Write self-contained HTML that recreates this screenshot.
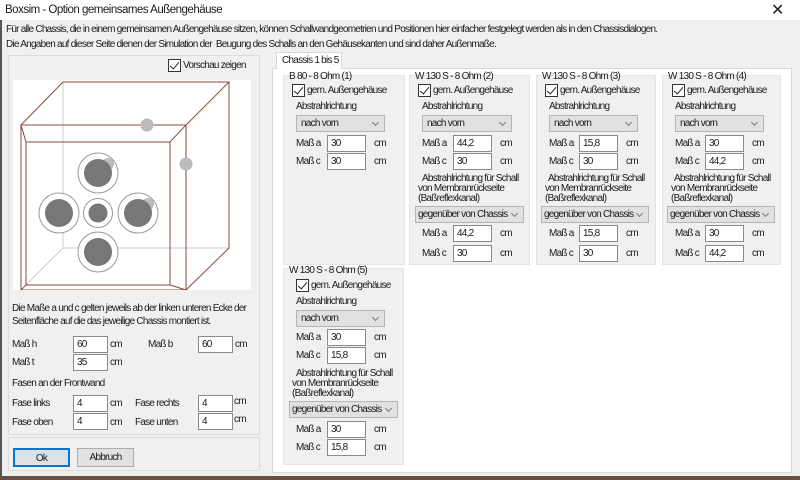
<!DOCTYPE html>
<html><head><meta charset="utf-8"><style>
*{box-sizing:border-box;margin:0;padding:0}
body{width:800px;height:480px;overflow:hidden;background:#f0f0f0;font-family:"Liberation Sans",sans-serif;font-size:10px;letter-spacing:-0.75px;color:#1a1a1a;position:relative}
.a{position:absolute;white-space:nowrap}
.inp{position:absolute;background:#fff;border:1px solid #8a8a8a;height:17px;padding:1px 3px;line-height:13px}
.sel{position:absolute;background:#e1e1e1;border:1px solid #b5b5b5;height:17px;padding:1px 4px;line-height:13px;white-space:nowrap}
.sel:after{content:"";position:absolute;right:6px;top:4px;width:4px;height:4px;border-right:1px solid #777;border-bottom:1px solid #777;transform:rotate(45deg)}
.cb{position:absolute;width:13px;height:13px;border:1px solid #333;background:#fff}
.cb:after{content:"";position:absolute;left:3px;top:0px;width:4px;height:8px;border-right:1.5px solid #222;border-bottom:1.5px solid #222;transform:rotate(40deg)}
.grp{position:absolute;background:#f0f0f0;border:1px solid #e4e4e4}
.btn{position:absolute;background:#e1e1e1;border:1px solid #adadad;text-align:center;line-height:17px}
.t{line-height:10px}
</style></head><body>
<div class="a" style="left:0;top:0;width:800px;height:20px;background:#fff"></div>
<div class="a" style="left:5px;top:4px;font-size:11.5px;letter-spacing:-0.5px">Boxsim - Option gemeinsames Außengehäuse</div>
<div class="a" style="left:771px;top:0px;font-size:16px;color:#222;letter-spacing:0">✕</div>
<div class="a" style="left:0;top:20px;width:2px;height:460px;background:#555"></div>
<div class="a" style="left:0;top:476px;width:800px;height:4px;background:#6b5040"></div>
<div class="a" style="left:6px;top:24px">Für alle Chassis, die in einem gemeinsamen Außengehäuse sitzen, können Schallwandgeometrien und Positionen hier einfacher festgelegt werden als in den Chassisdialogen.</div>
<div class="a" style="left:6px;top:39px">Die Angaben auf dieser Seite dienen der Simulation der&nbsp; Beugung des Schalls an den Gehäusekanten und sind daher Außenmaße.</div>

<div class="a" style="left:8px;top:55px;width:252px;height:380px;border:1px solid #dcdcdc"></div>
<div class="a" style="left:8px;top:437px;width:252px;height:34px;border:1px solid #dcdcdc"></div>
<div class="cb" style="left:168px;top:59px"></div><div class="a" style="left:183px;top:60px">Vorschau zeigen</div>
<svg class="a" style="left:13px;top:80px" width="238" height="210" viewBox="13 80 238 210">
<rect x="13" y="80" width="238" height="210" fill="#fff"/>
<g stroke="#ccc" fill="none" stroke-width="1"><line x1="63" y1="82" x2="63" y2="248"/><line x1="63" y1="248" x2="229" y2="248"/><line x1="63" y1="248" x2="26" y2="285"/></g>
<g stroke="#8b4a3e" fill="none" stroke-width="1"><polyline points="21,125 63,82 229,82 229,248 186,290"/><line x1="229" y1="82" x2="186" y2="125"/><rect x="21" y="125" width="165" height="165"/><polyline points="21,125 26,142 170,142 186,125"/><polyline points="26,142 26,285 170,285 170,142"/><line x1="26" y1="285" x2="21" y2="290"/><line x1="170" y1="285" x2="186" y2="290"/></g>
<g fill="#bbb"><circle cx="147" cy="125" r="6.5"/><circle cx="186" cy="164" r="6.5"/></g>
<g stroke="#999" fill="#fff"><circle cx="98" cy="173" r="20"/><circle cx="59" cy="213" r="20"/><circle cx="138" cy="213" r="20"/><circle cx="98" cy="252" r="20"/><circle cx="98" cy="213" r="14.5"/></g>
<g fill="#bbb"><circle cx="108" cy="164" r="6"/><circle cx="148" cy="204" r="6"/></g>
<g fill="#777"><circle cx="98" cy="173" r="14"/><circle cx="59" cy="213" r="14"/><circle cx="138" cy="213" r="14"/><circle cx="98" cy="252" r="14"/><circle cx="98" cy="213" r="9.5"/></g>
</svg>
<div class="a" style="left:12px;top:303px">Die Maße a und c gelten jeweils ab der linken unteren Ecke der</div>
<div class="a" style="left:12px;top:316px">Seitenfläche auf die das jeweilige Chassis montiert ist.</div>
<div class="a" style="left:12px;top:339px">Maß h</div><div class="inp" style="left:73px;top:336px;width:35px">60</div><div class="a" style="left:110px;top:339px">cm</div>
<div class="a" style="left:148px;top:339px">Maß b</div><div class="inp" style="left:198px;top:336px;width:35px">60</div><div class="a" style="left:235px;top:339px">cm</div>
<div class="a" style="left:12px;top:357px">Maß t</div><div class="inp" style="left:73px;top:354px;width:35px">35</div><div class="a" style="left:110px;top:357px">cm</div>
<div class="a" style="left:12px;top:378px">Fasen an der Frontwand</div>
<div class="a" style="left:12px;top:398px">Fase links</div><div class="inp" style="left:73px;top:395px;width:35px">4</div><div class="a" style="left:110px;top:398px">cm</div>
<div class="a" style="left:135px;top:398px">Fase rechts</div><div class="inp" style="left:198px;top:395px;width:35px">4</div><div class="a" style="left:234px;top:396px">cm</div>
<div class="a" style="left:12px;top:417px">Fase oben</div><div class="inp" style="left:73px;top:413px;width:35px">4</div><div class="a" style="left:110px;top:417px">cm</div>
<div class="a" style="left:135px;top:417px">Fase unten</div><div class="inp" style="left:198px;top:413px;width:35px">4</div><div class="a" style="left:234px;top:414px">cm</div>
<div class="btn" style="left:13px;top:448px;width:57px;height:19px;border:2px solid #0078d7">Ok</div>
<div class="btn" style="left:77px;top:448px;width:57px;height:19px">Abbruch</div>

<div class="a" style="left:272px;top:68px;width:520px;height:405px;background:#fff;border:1px solid #d9d9d9"></div>
<div class="a" style="left:276px;top:52px;width:66px;height:17px;background:#fff;border:1px solid #d9d9d9;border-bottom:none;padding:2px 5px">Chassis 1 bis 5</div>

<div class="grp" style="left:283px;top:75px;width:122px;height:190px"></div>
<div class="a" style="left:289px;top:71px">B 80 - 8 Ohm (1)</div>
<div class="cb" style="left:292px;top:84px"></div><div class="a" style="left:307px;top:85px">gem. Außengehäuse</div>
<div class="a" style="left:296px;top:101px">Abstrahlrichtung</div>
<div class="sel" style="left:296px;top:115px;width:89px">nach vorn</div>
<div class="a" style="left:296px;top:138px">Maß a</div><div class="inp" style="left:327px;top:135px;width:39px">30</div><div class="a" style="left:374px;top:138px">cm</div>
<div class="a" style="left:296px;top:156px">Maß c</div><div class="inp" style="left:327px;top:153px;width:39px">30</div><div class="a" style="left:374px;top:156px">cm</div>

<div class="grp" style="left:409px;top:75px;width:121px;height:190px"></div>
<div class="a" style="left:415px;top:71px">W 130 S - 8 Ohm (2)</div>
<div class="cb" style="left:418px;top:84px"></div><div class="a" style="left:433px;top:85px">gem. Außengehäuse</div>
<div class="a" style="left:422px;top:101px">Abstrahlrichtung</div>
<div class="sel" style="left:422px;top:115px;width:90px">nach vorn</div>
<div class="a" style="left:422px;top:138px">Maß a</div><div class="inp" style="left:453px;top:135px;width:39px">44,2</div><div class="a" style="left:500px;top:138px">cm</div>
<div class="a" style="left:422px;top:156px">Maß c</div><div class="inp" style="left:453px;top:153px;width:39px">30</div><div class="a" style="left:500px;top:156px">cm</div>
<div class="a t" style="left:422px;top:174px">Abstrahlrichtung für Schall</div>
<div class="a t" style="left:418px;top:184px">von Membranrückseite</div>
<div class="a t" style="left:418px;top:194px">(Baßreflexkanal)</div>
<div class="sel" style="left:415px;top:206px;width:109px;padding-left:2px">gegenüber von Chassis</div>
<div class="a" style="left:422px;top:228px">Maß a</div><div class="inp" style="left:453px;top:225px;width:39px">44,2</div><div class="a" style="left:500px;top:228px">cm</div>
<div class="a" style="left:422px;top:248px">Maß c</div><div class="inp" style="left:453px;top:245px;width:39px">30</div><div class="a" style="left:500px;top:248px">cm</div>

<div class="grp" style="left:536px;top:75px;width:120px;height:190px"></div>
<div class="a" style="left:542px;top:71px">W 130 S - 8 Ohm (3)</div>
<div class="cb" style="left:545px;top:84px"></div><div class="a" style="left:560px;top:85px">gem. Außengehäuse</div>
<div class="a" style="left:549px;top:101px">Abstrahlrichtung</div>
<div class="sel" style="left:549px;top:115px;width:89px">nach vorn</div>
<div class="a" style="left:549px;top:138px">Maß a</div><div class="inp" style="left:579px;top:135px;width:39px">15,8</div><div class="a" style="left:626px;top:138px">cm</div>
<div class="a" style="left:549px;top:156px">Maß c</div><div class="inp" style="left:579px;top:153px;width:39px">30</div><div class="a" style="left:626px;top:156px">cm</div>
<div class="a t" style="left:548px;top:174px">Abstrahlrichtung für Schall</div>
<div class="a t" style="left:545px;top:184px">von Membranrückseite</div>
<div class="a t" style="left:545px;top:194px">(Baßreflexkanal)</div>
<div class="sel" style="left:541px;top:206px;width:108px;padding-left:2px">gegenüber von Chassis</div>
<div class="a" style="left:549px;top:228px">Maß a</div><div class="inp" style="left:579px;top:225px;width:39px">15,8</div><div class="a" style="left:626px;top:228px">cm</div>
<div class="a" style="left:549px;top:248px">Maß c</div><div class="inp" style="left:579px;top:245px;width:39px">30</div><div class="a" style="left:626px;top:248px">cm</div>

<div class="grp" style="left:662px;top:75px;width:119px;height:190px"></div>
<div class="a" style="left:668px;top:71px">W 130 S - 8 Ohm (4)</div>
<div class="cb" style="left:672px;top:84px"></div><div class="a" style="left:687px;top:85px">gem. Außengehäuse</div>
<div class="a" style="left:675px;top:101px">Abstrahlrichtung</div>
<div class="sel" style="left:675px;top:115px;width:89px">nach vorn</div>
<div class="a" style="left:675px;top:138px">Maß a</div><div class="inp" style="left:705px;top:135px;width:39px">30</div><div class="a" style="left:752px;top:138px">cm</div>
<div class="a" style="left:675px;top:156px">Maß c</div><div class="inp" style="left:705px;top:153px;width:39px">44,2</div><div class="a" style="left:752px;top:156px">cm</div>
<div class="a t" style="left:674px;top:174px">Abstrahlrichtung für Schall</div>
<div class="a t" style="left:671px;top:184px">von Membranrückseite</div>
<div class="a t" style="left:671px;top:194px">(Baßreflexkanal)</div>
<div class="sel" style="left:667px;top:206px;width:108px;padding-left:2px">gegenüber von Chassis</div>
<div class="a" style="left:675px;top:228px">Maß a</div><div class="inp" style="left:705px;top:225px;width:39px">30</div><div class="a" style="left:752px;top:228px">cm</div>
<div class="a" style="left:675px;top:248px">Maß c</div><div class="inp" style="left:705px;top:245px;width:39px">44,2</div><div class="a" style="left:752px;top:248px">cm</div>

<div class="grp" style="left:283px;top:268px;width:121px;height:197px"></div>
<div class="a" style="left:289px;top:265px">W 130 S - 8 Ohm (5)</div>
<div class="cb" style="left:296px;top:279px"></div><div class="a" style="left:311px;top:280px">gem. Außengehäuse</div>
<div class="a" style="left:296px;top:296px">Abstrahlrichtung</div>
<div class="sel" style="left:296px;top:310px;width:89px">nach vorn</div>
<div class="a" style="left:296px;top:332px">Maß a</div><div class="inp" style="left:327px;top:329px;width:39px">30</div><div class="a" style="left:374px;top:332px">cm</div>
<div class="a" style="left:296px;top:350px">Maß c</div><div class="inp" style="left:327px;top:347px;width:39px">15,8</div><div class="a" style="left:374px;top:350px">cm</div>
<div class="a t" style="left:296px;top:369px">Abstrahlrichtung für Schall</div>
<div class="a t" style="left:292px;top:379px">von Membranrückseite</div>
<div class="a t" style="left:292px;top:389px">(Baßreflexkanal)</div>
<div class="sel" style="left:289px;top:401px;width:109px;padding-left:2px">gegenüber von Chassis</div>
<div class="a" style="left:296px;top:424px">Maß a</div><div class="inp" style="left:327px;top:421px;width:39px">30</div><div class="a" style="left:374px;top:424px">cm</div>
<div class="a" style="left:296px;top:442px">Maß c</div><div class="inp" style="left:327px;top:439px;width:39px">15,8</div><div class="a" style="left:374px;top:442px">cm</div>
</body></html>
